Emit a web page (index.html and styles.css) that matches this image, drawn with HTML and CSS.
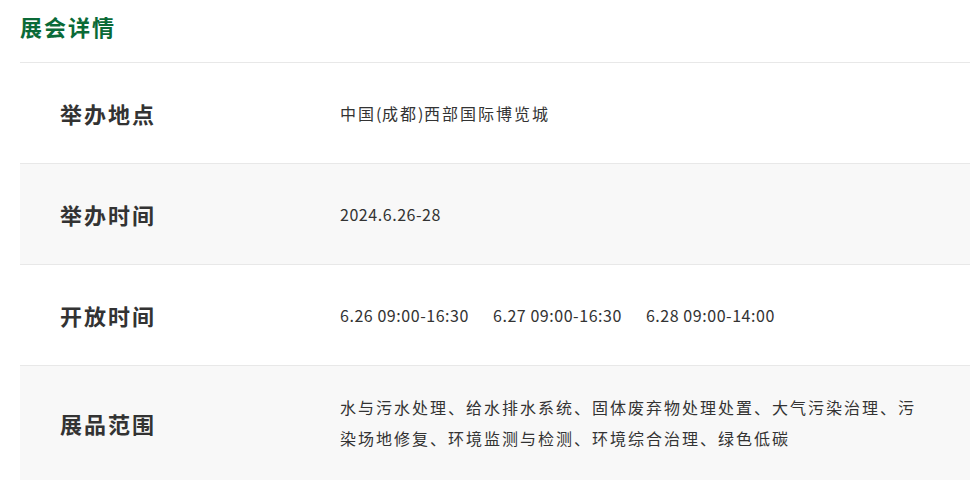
FILE: index.html
```html
<!DOCTYPE html>
<html lang="zh-CN">
<head>
<meta charset="utf-8">
<link rel="stylesheet" href="styles.css">
</head>
<body>
<div class="wrap">
  <h2 class="title">展会详情</h2>
  <div class="table">
    <div class="row">
      <div class="label">举办地点</div>
      <div class="value">中国<span class="num">(</span>成都<span class="num">)</span>西部国际博览城</div>
    </div>
    <div class="row alt">
      <div class="label">举办时间</div>
      <div class="value"><span class="num">2024.6.26-28</span></div>
    </div>
    <div class="row">
      <div class="label">开放时间</div>
      <div class="value"><span class="num seg">6.26 09:00-16:30</span><span class="num seg">6.27 09:00-16:30</span><span class="num seg">6.28 09:00-14:00</span></div>
    </div>
    <div class="row alt">
      <div class="label">展品范围</div>
      <div class="value">水与污水处理、给水排水系统、固体废弃物处理处置、大气污染治理、污染场地修复、环境监测与检测、环境综合治理、绿色低碳</div>
    </div>
  </div>
</div>
</body>
</html>
```
FILE: styles.css
```css
html, body {
  margin: 0;
  padding: 0;
  background: #fff;
}
body {
  font-family: "Noto Sans CJK SC", "Noto Sans", sans-serif;
  color: #333;
}
.wrap {
  width: 950px;
  margin-left: 20px;
}
.title {
  margin: 0;
  padding: 11px 0 21px;
  font-size: 22px;
  line-height: 30px;
  font-weight: 700;
  color: #0a6a37;
  letter-spacing: 2px;
}
.table {
  border-top: 1px solid #e8e8e8;
}
.row {
  display: flex;
  align-items: center;
  min-height: 101px;
  padding: 26px 0;
  box-sizing: border-box;
  border-bottom: 1px solid #e8e8e8;
}
.row:last-child {
  border-bottom: none;
}
.row.alt {
  background: #f8f8f8;
}
.label {
  width: 280px;
  padding-left: 40px;
  flex: none;
  font-size: 22px;
  font-weight: 700;
  letter-spacing: 2px;
  line-height: 30px;
}
.value {
  flex: 1;
  padding-right: 50px;
  font-size: 16px;
  letter-spacing: 2px;
  line-height: 31px;
}
.num {
  letter-spacing: 0.55px;
}
.seg {
  margin-right: 24px;
}
```
